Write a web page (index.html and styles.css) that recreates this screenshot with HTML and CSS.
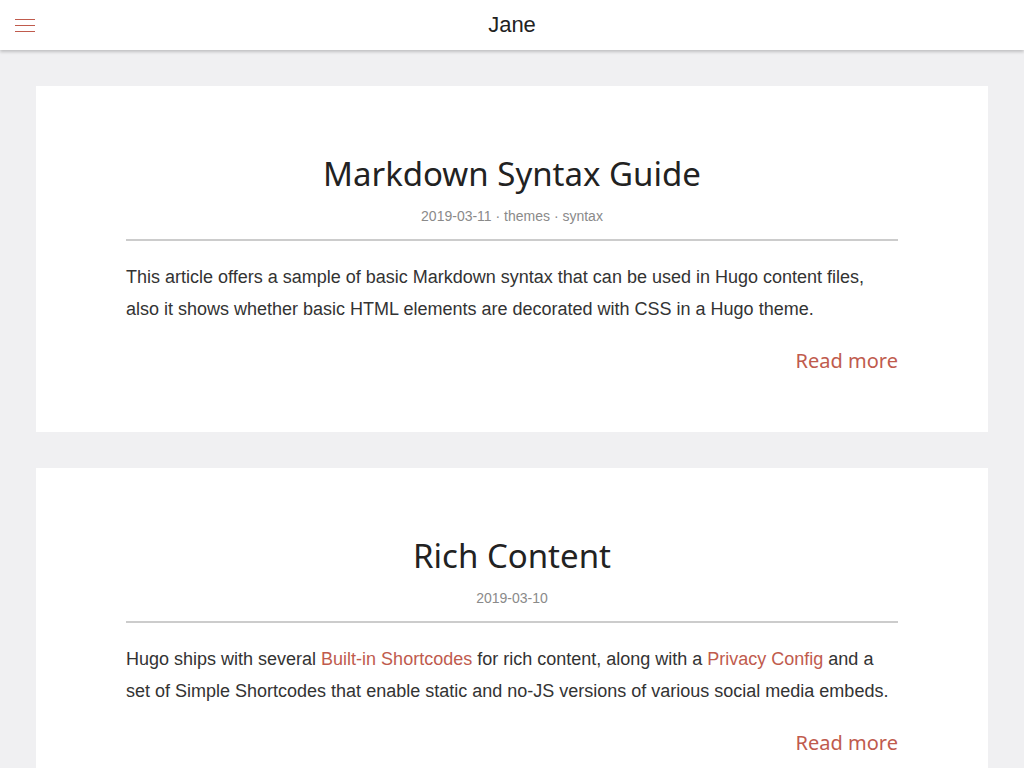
FILE: index.html
```html
<!DOCTYPE html>
<html lang="en">
<head>
<meta charset="utf-8">
<title>Jane</title>
<link rel="stylesheet" href="styles.css">
</head>
<body>
<header class="topbar">
  <button class="menu-btn" aria-label="Menu">
    <svg width="20" height="14" viewBox="0 0 20 14"><path d="M0 0.5H20M0 6.5H20M0 12.5H20" stroke="#c05b4d" stroke-width="1" fill="none"/></svg>
  </button>
  <div class="logo">Jane</div>
</header>
<main class="posts">
  <article class="post">
    <h1 class="post-title">Markdown Syntax Guide</h1>
    <div class="post-meta">2019-03-11 · themes · syntax</div>
    <div class="post-content">
      <p>This article offers a sample of basic Markdown syntax that can be used in Hugo content files, also it shows whether basic HTML elements are decorated with CSS in a Hugo theme.</p>
    </div>
    <div class="read-more"><a href="#">Read more</a></div>
  </article>
  <article class="post">
    <h1 class="post-title">Rich Content</h1>
    <div class="post-meta">2019-03-10</div>
    <div class="post-content">
      <p>Hugo ships with several <a href="#">Built-in Shortcodes</a> for rich content, along with a <a href="#">Privacy Config</a> and a set of Simple Shortcodes that enable static and no-JS versions of various social media embeds.</p>
    </div>
    <div class="read-more"><a href="#">Read more</a></div>
  </article>
</main>
</body>
</html>
```
FILE: styles.css
```css
* { box-sizing: border-box; }
html, body { margin: 0; padding: 0; }
body {
  background: #f0f0f2;
  font-family: "Liberation Sans", Arial, sans-serif;
  color: #333;
}
.topbar {
  position: relative;
  height: 50px;
  background: #fff;
  box-shadow: 0 2px 3px rgba(0,0,0,0.2);
  display: flex;
  align-items: center;
  justify-content: center;
}
.menu-btn {
  position: absolute;
  left: 15px;
  top: 19px;
  padding: 0;
  border: 0;
  background: none;
  line-height: 0;
}
.logo {
  font-size: 22px;
  color: #222;
}
.posts {
  padding: 36px 36px 0;
  display: flex;
  flex-direction: column;
  gap: 36px;
}
.post {
  background: #fff;
  padding: 67px 90px 58px;
}
.post-title {
  margin: 0;
  text-align: center;
  font-family: "Noto Sans", "Open Sans", sans-serif;
  font-weight: 400;
  font-size: 33px;
  line-height: 1.3;
  color: #222;
}
.post-meta {
  margin-top: 12px;
  text-align: center;
  font-size: 14px;
  color: #8a8a8a;
  padding-bottom: 15px;
  border-bottom: 2px solid #ccc;
}
.post-content {
  margin-top: 20px;
  font-size: 18px;
  line-height: 32px;
  color: #333;
}
.post-content p { margin: 0; }
.post-content a, .read-more a { color: #c05b4d; text-decoration: none; }
.read-more {
  margin-top: 22px;
  text-align: right;
  font-family: "Noto Sans", "Open Sans", sans-serif;
  font-size: 20px;
}
```
